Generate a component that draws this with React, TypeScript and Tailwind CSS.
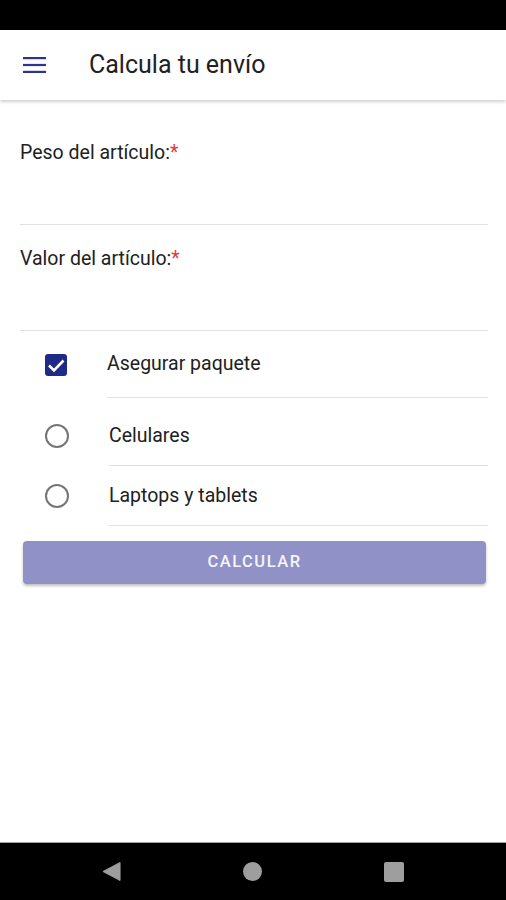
import { useState } from 'react';

const Field = ({ label, first }: { label: string; first?: boolean }) => (
  <div className={first ? 'pt-[41px]' : 'pt-[22px]'}>
    <div className="h-[24px] text-[19.5px] leading-[24px] text-[#212121]">
      {label}
      <span className="text-[#e53935]">*</span>
    </div>
    <input className="block h-[60px] w-full border-b border-[#e0e0e0] bg-transparent outline-none" />
  </div>
);

const Radio = ({ label, checked, onClick }: { label: string; checked: boolean; onClick: () => void }) => (
  <button type="button" onClick={onClick} className="flex h-[60px] w-full items-center text-left">
    <span className="ml-[25px] flex h-[24px] w-[24px] items-center justify-center rounded-full border-2 border-[#757575]">
      {checked && <span className="h-[12px] w-[12px] rounded-full bg-[#1f2a87]" />}
    </span>
    <span className="ml-[40px] flex h-full flex-1 items-center border-b border-[#e0e0e0] text-[19.5px] text-[#212121]">
      {label}
    </span>
  </button>
);

export default function App() {
  const [insured, setInsured] = useState(true);
  const [kind, setKind] = useState('');

  return (
    <div className="flex h-[900px] w-full flex-col bg-white font-['Roboto',sans-serif]">
      <div className="h-[30px] bg-black" />

      <header className="relative z-10 flex h-[70px] items-center bg-white shadow-[0_2px_3px_rgba(0,0,0,0.18)]">
        <svg className="ml-[23px] h-[16px] w-[23px]" viewBox="0 0 23 16">
          <rect x="0" y="0" width="23" height="2.2" fill="#2b3491" />
          <rect x="0" y="6.9" width="23" height="2.2" fill="#2b3491" />
          <rect x="0" y="13.8" width="23" height="2.2" fill="#2b3491" />
        </svg>
        <h1 className="ml-[43px] text-[25px] text-[#212121]">Calcula tu envío</h1>
      </header>

      <main className="flex-1 pl-[20px] pr-[18px]">
        <Field label="Peso del artículo:" first />
        <Field label="Valor del artículo:" />

        <button type="button" onClick={() => setInsured(!insured)} className="flex h-[67px] w-full items-center text-left">
          <span className="ml-[25px] flex h-[22px] w-[22px] items-center justify-center rounded-[3px] bg-[#1f2a87]">
            {insured && (
              <svg viewBox="0 0 22 22" className="h-[22px] w-[22px]">
                <path d="M4 11.5l5 5L18.5 6.5" fill="none" stroke="white" strokeWidth="2.6" />
              </svg>
            )}
          </span>
          <span className="ml-[40px] flex h-full flex-1 items-center border-b border-[#e0e0e0] text-[19.5px] text-[#212121]">
            Asegurar paquete
          </span>
        </button>

        <div className="mt-[8px]">
          <Radio label="Celulares" checked={kind === 'cel'} onClick={() => setKind('cel')} />
          <Radio label="Laptops y tablets" checked={kind === 'lap'} onClick={() => setKind('lap')} />
        </div>

        <button
          type="button"
          className="ml-[3px] mt-[15px] flex h-[43px] w-[463px] items-center justify-center rounded-[4px] bg-[#9091c6] text-[16.5px] font-medium tracking-[1.5px] text-[#f5f5fb] shadow-[0_2px_3px_rgba(0,0,0,0.25)]"
        >
          CALCULAR
        </button>
      </main>

      <nav className="flex h-[58px] items-center justify-center gap-[122px] border-t border-[#9e9e9e] bg-black">
        <svg viewBox="0 0 20 22" className="h-[21px] w-[19px]">
          <path d="M19 1.5L1 11l18 9.5z" fill="#9e9e9e" stroke="#9e9e9e" strokeLinejoin="round" />
        </svg>
        <span className="h-[19px] w-[19px] rounded-full bg-[#9e9e9e]" />
        <span className="h-[20px] w-[20px] rounded-[2px] bg-[#9e9e9e]" />
      </nav>
    </div>
  );
}
